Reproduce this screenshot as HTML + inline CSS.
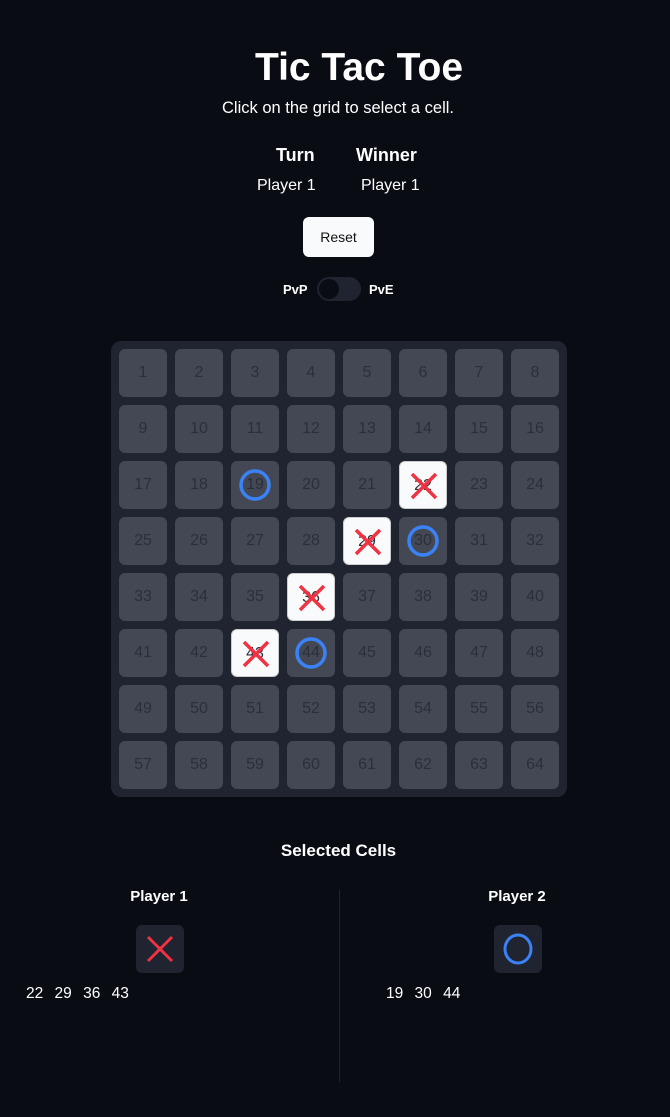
<!DOCTYPE html>
<html><head><meta charset="utf-8"><style>
*{margin:0;padding:0;box-sizing:border-box}
body{width:670px;height:1117px;background:#090c13;font-family:"Liberation Sans",sans-serif;color:#fff;position:relative;overflow:hidden}
.a{position:absolute}
h1{position:absolute;left:0;width:718px;top:46px;text-align:center;font-size:39px;font-weight:bold}
.sub{left:0;width:676px;top:99px;text-align:center;font-size:16.5px}
.reset{left:303px;top:217px;width:71px;height:40px;background:#f9fafb;border-radius:6px;color:#111;font-size:14px;text-align:center;line-height:40px}
.grid{left:111px;top:341px;width:456px;height:456px;background:#1f2430;border-radius:10px}
.c{position:absolute;width:48px;height:48px;border-radius:6px;background:#434854;color:#2a2f3a;font-size:16px;text-align:center;line-height:48px}
.c.w{background:#f9fafb;border:1px solid #ccc}
.c svg{position:absolute;left:0;top:0}
</style></head><body>
<h1>Tic Tac Toe</h1>
<div class="a sub">Click on the grid to select a cell.</div>
<div class="a" style="left:276px;top:145px;font-weight:bold;font-size:18px">Turn</div>
<div class="a" style="left:356px;top:145px;font-weight:bold;font-size:18px">Winner</div>
<div class="a" style="left:257px;top:177px;font-size:16px">Player 1</div>
<div class="a" style="left:361px;top:177px;font-size:16px">Player 1</div>
<div class="a reset">Reset</div>
<div class="a" style="left:283px;top:282px;font-size:13px;font-weight:bold">PvP</div>
<div class="a" style="left:317px;top:277px;width:44px;height:24px;border-radius:12px;background:#1f2430"><div style="position:absolute;left:2px;top:2px;width:20px;height:20px;border-radius:50%;background:#090c13"></div></div>
<div class="a" style="left:369px;top:282px;font-size:13px;font-weight:bold">PvE</div>
<div class="a grid" id="g"></div>
<div class="a" style="left:0;width:677px;top:841px;text-align:center;font-size:17px;font-weight:bold">Selected Cells</div>
<div class="a" style="left:339px;top:890px;width:1px;height:192px;background:#1f2430"></div>
<div class="a" style="left:100px;width:118px;top:888px;text-align:center;font-size:15px;font-weight:bold">Player 1</div>
<div class="a" style="left:458px;width:118px;top:888px;text-align:center;font-size:15px;font-weight:bold">Player 2</div>
<div class="a" style="left:136px;top:925px;width:48px;height:48px;border-radius:6px;background:#1f2430"><svg width="48" height="48"><path d="M12 12L36 36M36 12L12 36" stroke="#ef3343" stroke-width="3"/></svg></div>
<div class="a" style="left:494px;top:925px;width:48px;height:48px;border-radius:6px;background:#1f2430"><svg width="48" height="48"><ellipse cx="24" cy="24" rx="13" ry="14" fill="none" stroke="#3b82f6" stroke-width="3"/></svg></div>
<div class="a" style="left:26px;top:985px;font-size:15.5px;word-spacing:7px">22 29 36 43</div>
<div class="a" style="left:386px;top:985px;font-size:15.5px;word-spacing:7px">19 30 44</div>
<script>
var g=document.getElementById('g'),X=[22,29,36,43],O=[19,30,44],h='';
for(var i=1;i<=64;i++){var r=Math.floor((i-1)/8),c=(i-1)%8,x=X.indexOf(i)>=0,o=O.indexOf(i)>=0;
h+='<div class="c'+(x?' w':'')+'" style="left:'+(8+c*56)+'px;top:'+(8+r*56)+'px">'+i+
(x?'<svg width="48" height="48"><path d="M12 12L36 36M36 12L12 36" stroke="#ef3343" stroke-width="3.5"/></svg>':'')+
(o?'<svg width="48" height="48"><circle cx="24" cy="24" r="14" fill="none" stroke="#3b82f6" stroke-width="3.5"/></svg>':'')+'</div>';}
g.innerHTML=h;
</script>
</body></html>
